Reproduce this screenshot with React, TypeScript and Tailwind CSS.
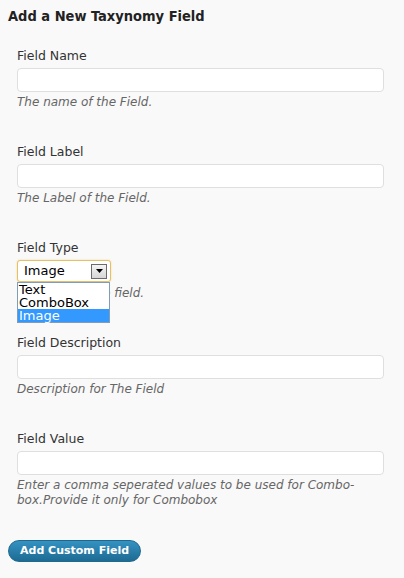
import { useState } from "react";

type FieldProps = {
  label: string;
  help: React.ReactNode;
  className?: string;
};

function TextField({ label, help, className = "pb-[34px]" }: FieldProps) {
  const [value, setValue] = useState("");
  return (
    <div className={className}>
      <label className="block text-[12.5px] leading-[16px] text-[#333]">{label}</label>
      <input
        type="text"
        value={value}
        onChange={(e) => setValue(e.target.value)}
        className="mt-[4px] block h-[24px] w-full rounded-[4px] border border-[#dfdfdf] bg-white px-[4px] text-[13px] outline-none"
      />
      <p className="mt-[3px] text-[12px] italic leading-[15px] text-[#666]">{help}</p>
    </div>
  );
}

function TypeSelect() {
  const options = ["Text", "ComboBox", "Image"];
  const [selected, setSelected] = useState("Image");
  return (
    <div className="pb-[34px]">
      <label className="block text-[12.5px] leading-[16px] text-[#333]">Field Type</label>
      <div className="relative mt-[4px] w-[94px]">
        <div className="flex h-[22px] items-center justify-between rounded-[3px] border border-[#e4c068] bg-white pl-[6px] pr-[3px] shadow-[0_0_2px_#f0d890]">
          <span className="text-[13px] leading-[16px] text-black">{selected}</span>
          <span className="flex h-[15px] w-[16px] items-center justify-center border border-[#6b6b6b] bg-gradient-to-b from-[#f4f4f4] to-[#d6d6d6]">
            <svg width="7" height="4" viewBox="0 0 7 4">
              <path d="M0 0h7L3.5 4z" fill="#000" />
            </svg>
          </span>
        </div>
        <ul className="absolute left-0 top-[22px] z-10 w-[93px] border border-[#7f9db9] bg-white">
          {options.map((o) => (
            <li
              key={o}
              onClick={() => setSelected(o)}
              className={
                o === selected
                  ? "h-[13px] bg-[#3399ff] pl-[1px] text-[13px] leading-[13px] text-white"
                  : "h-[13px] pl-[1px] text-[13px] leading-[13px] text-black"
              }
            >
              {o}
            </li>
          ))}
        </ul>
      </div>
      <p className="mt-[4px] text-[12px] italic leading-[15px] text-[#666]">The Type of the field.</p>
    </div>
  );
}

export default function App() {
  return (
    <div
      className="min-h-[578px] w-[404px] bg-[#f9f9f9] pl-[8px] pt-[7px]"
      style={{ fontFamily: '"DejaVu Sans", Verdana, sans-serif' }}
    >
      <h3
        className="text-[14.5px] font-bold leading-[18px] text-[#222]"
        style={{ fontFamily: '"DejaVu Sans Condensed", "DejaVu Sans", Verdana, sans-serif' }}
      >
        Add a New Taxynomy Field
      </h3>
      <form className="pr-[20px] pl-[9px] pt-[23px]" onSubmit={(e) => e.preventDefault()}>
        <TextField label="Field Name" help="The name of the Field." />
        <TextField label="Field Label" help="The Label of the Field." />
        <TypeSelect />
        <TextField label="Field Description" help="Description for The Field" />
        <TextField
          label="Field Value"
          help="Enter a comma seperated values to be used for Combo-box.Provide it only for Combobox"
          className="pb-[29px]"
        />
      </form>
      <button
        type="submit"
        className="h-[22px] rounded-full border border-[#1e6a8f] bg-gradient-to-b from-[#3592c2] to-[#1d6b93] px-[11px] text-[11px] font-bold leading-[20px] text-white"
      >
        Add Custom Field
      </button>
    </div>
  );
}
